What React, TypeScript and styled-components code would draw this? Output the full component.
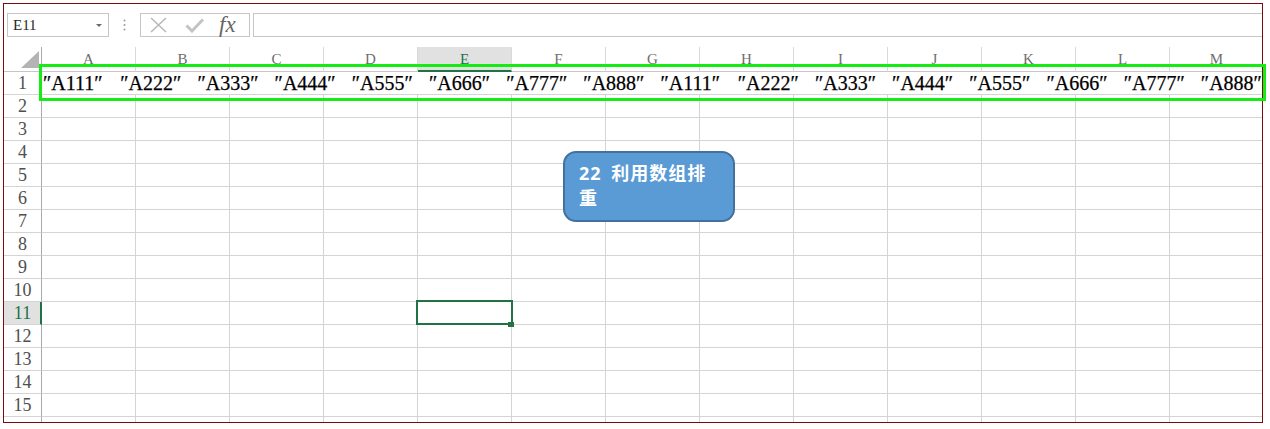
import React from "react";
import styled, { createGlobalStyle } from "styled-components";

const GlobalStyle = createGlobalStyle`
  html, body {
    margin: 0;
    padding: 0;
    background: #ffffff;
  }
  body {
    font-family: "Liberation Sans", Arial, sans-serif;
  }
`;

const columns = ["A", "B", "C", "D", "E", "F", "G", "H", "I", "J", "K", "L", "M"];
const base = ["A111", "A222", "A333", "A444", "A555", "A666", "A777", "A888"];
const values = [...base, ...base];
const ROW_COUNT = 16;
const LAST_LABELLED_ROW = 15;
const ACTIVE_COL = "E";
const ACTIVE_ROW = 11;

const Page = styled.div`
  position: relative;
  box-sizing: border-box;
  width: 1270px;
  height: 429px;
  padding: 3px 0 0 3px;
  overflow: hidden;
`;

const Frame = styled.div`
  box-sizing: border-box;
  width: 1260px;
  height: 420px;
  border: 1px solid #7c0c0c;
  overflow: hidden;
  display: flex;
  flex-direction: column;
  background: #fff;
`;

const Toolbar = styled.div`
  box-sizing: border-box;
  flex-shrink: 0;
  height: 43px;
  padding: 9px 0 0 3px;
  display: flex;
  align-items: flex-start;
`;

const NameBox = styled.div`
  box-sizing: border-box;
  width: 102px;
  height: 24px;
  border: 1px solid #c6c6c6;
  padding: 0 6px 0 5px;
  display: flex;
  align-items: center;
  justify-content: space-between;
  font: 15px "Liberation Serif", serif;
  color: #262626;
`;

const DropArrow = styled.span`
  width: 0;
  height: 0;
  border-left: 3px solid transparent;
  border-right: 3px solid transparent;
  border-top: 3px solid #6a6a6a;
`;

const Grip = styled.div`
  width: 31px;
  height: 24px;
  display: flex;
  align-items: center;
  justify-content: center;
`;

const FuncBox = styled.div`
  box-sizing: border-box;
  width: 110px;
  height: 24px;
  border: 1px solid #c6c6c6;
  padding-left: 8px;
  display: flex;
  align-items: center;
  gap: 17px;
`;

const Fx = styled.span`
  font: italic 23px "Liberation Serif", serif;
  color: #666666;
  margin-left: -2px;
  line-height: 22px;
`;

const FormulaInput = styled.div`
  box-sizing: border-box;
  flex: 1;
  height: 24px;
  margin-left: 3px;
  border: 1px solid #c6c6c6;
  border-right: none;
`;

const Sheet = styled.div`
  display: grid;
  grid-template-columns: 38px repeat(13, 94px);
  grid-template-rows: 25px;
  grid-auto-rows: 23px;
`;

const Corner = styled.div`
  box-sizing: border-box;
  border-right: 1px solid #ababab;
  border-bottom: 1px solid #c6c6c6;
  display: flex;
  align-items: flex-end;
  justify-content: flex-end;
  padding: 0 2px 3px 0;
`;

const ColHeader = styled.div<{ $active?: boolean }>`
  box-sizing: border-box;
  display: flex;
  align-items: center;
  justify-content: center;
  font: 15px "Liberation Serif", serif;
  color: ${(p) => (p.$active ? "#217346" : "#6e6e6e")};
  background: ${(p) => (p.$active ? "#e1e1e1" : "#ffffff")};
  border-right: 1px solid #d9d9d9;
  border-bottom: ${(p) => (p.$active ? "2px solid #217346" : "1px solid #c6c6c6")};
  padding-top: ${(p) => (p.$active ? "2px" : "1px")};
`;

const RowHeader = styled.div<{ $active?: boolean }>`
  box-sizing: border-box;
  display: flex;
  align-items: center;
  justify-content: center;
  font: 18px "Liberation Serif", serif;
  color: ${(p) => (p.$active ? "#217346" : "#4f4f4f")};
  background: ${(p) => (p.$active ? "#e1e1e1" : "#ffffff")};
  border-right: ${(p) => (p.$active ? "2px solid #217346" : "1px solid #ababab")};
  border-bottom: 1px solid #d4d4d4;
  padding-left: ${(p) => (p.$active ? "1px" : "0")};
`;

const Cell = styled.div<{ $selected?: boolean }>`
  box-sizing: border-box;
  position: relative;
  border-right: 1px solid #d4d4d4;
  border-bottom: 1px solid #d4d4d4;
  z-index: ${(p) => (p.$selected ? 2 : "auto")};

  ${(p) =>
    p.$selected &&
    `
    &::after {
      content: "";
      position: absolute;
      top: -2px;
      left: -2px;
      right: -2px;
      bottom: -1px;
      border: 2px solid #217346;
    }
    &::before {
      content: "";
      position: absolute;
      right: -3px;
      bottom: -3px;
      width: 6px;
      height: 5px;
      background: #217346;
      z-index: 3;
    }
  `}
`;

const TextRow = styled.div`
  box-sizing: border-box;
  grid-column: span 13;
  border-bottom: 1px solid #d4d4d4;
  padding: 1px 0 0 1px;
  display: flex;
  align-items: center;
  white-space: nowrap;
  overflow: hidden;
  font: 20px "Liberation Serif", serif;
  color: #000;
  -webkit-text-stroke: 0.25px #000;
`;

const Token = styled.span`
  flex-shrink: 0;
  width: 77.2px;
`;

const Highlight = styled.div`
  position: absolute;
  left: 39px;
  top: 64px;
  width: 1227px;
  height: 37px;
  box-sizing: border-box;
  border: 3.5px solid #14ec14;
  pointer-events: none;
`;

const Callout = styled.div`
  position: absolute;
  left: 563px;
  top: 151px;
  box-sizing: border-box;
  width: 172px;
  height: 71px;
  padding: 8px 22px 0 14px;
  background: #5b9bd5;
  border: 2px solid #41719c;
  border-radius: 13px;
  color: #ffffff;
  font: bold 18px "Noto Sans", "Noto Sans CJK SC", sans-serif;
  letter-spacing: 1px;
  word-spacing: 4px;
  line-height: 25px;
`;

function CloseIcon() {
  return (
    <svg width="19" height="16" viewBox="0 0 19 16">
      <path d="M2 1 L17 15 M17 1 L2 15" stroke="#b9b9b9" strokeWidth="1.6" fill="none" />
    </svg>
  );
}

function CheckIcon() {
  return (
    <svg width="19" height="16" viewBox="0 0 19 16">
      <path d="M1.5 8.5 L7 14 L18 2.5" stroke="#c3c3c3" strokeWidth="3" fill="none" />
    </svg>
  );
}

function GripIcon() {
  return (
    <svg width="3" height="12" viewBox="0 0 3 12">
      <circle cx="1.5" cy="1.5" r="1" fill="#9a9a9a" />
      <circle cx="1.5" cy="6" r="1" fill="#9a9a9a" />
      <circle cx="1.5" cy="10.5" r="1" fill="#9a9a9a" />
    </svg>
  );
}

function CornerIcon() {
  return (
    <svg width="18" height="17" viewBox="0 0 18 17">
      <path d="M18 0 L18 17 L0 17 Z" fill="#b4b4b4" />
    </svg>
  );
}

export default function App() {
  const rows = Array.from({ length: ROW_COUNT }, (_, i) => i + 1);

  return (
    <>
      <GlobalStyle />
      <Page>
        <Frame>
          <Toolbar>
            <NameBox>
              E11
              <DropArrow />
            </NameBox>
            <Grip>
              <GripIcon />
            </Grip>
            <FuncBox>
              <CloseIcon />
              <CheckIcon />
              <Fx>fx</Fx>
            </FuncBox>
            <FormulaInput />
          </Toolbar>
          <Sheet>
            <Corner>
              <CornerIcon />
            </Corner>
            {columns.map((c) => (
              <ColHeader key={c} $active={c === ACTIVE_COL}>
                {c}
              </ColHeader>
            ))}
            {rows.map((r) => (
              <React.Fragment key={r}>
                <RowHeader $active={r === ACTIVE_ROW}>
                  {r <= LAST_LABELLED_ROW ? r : null}
                </RowHeader>
                {r === 1 ? (
                  <TextRow>
                    {values.map((v, i) => (
                      <Token key={i}>″{v}″</Token>
                    ))}
                  </TextRow>
                ) : (
                  columns.map((c) => (
                    <Cell key={c} $selected={r === ACTIVE_ROW && c === ACTIVE_COL} />
                  ))
                )}
              </React.Fragment>
            ))}
          </Sheet>
        </Frame>
        <Highlight />
        <Callout>22 利用数组排重</Callout>
      </Page>
    </>
  );
}
